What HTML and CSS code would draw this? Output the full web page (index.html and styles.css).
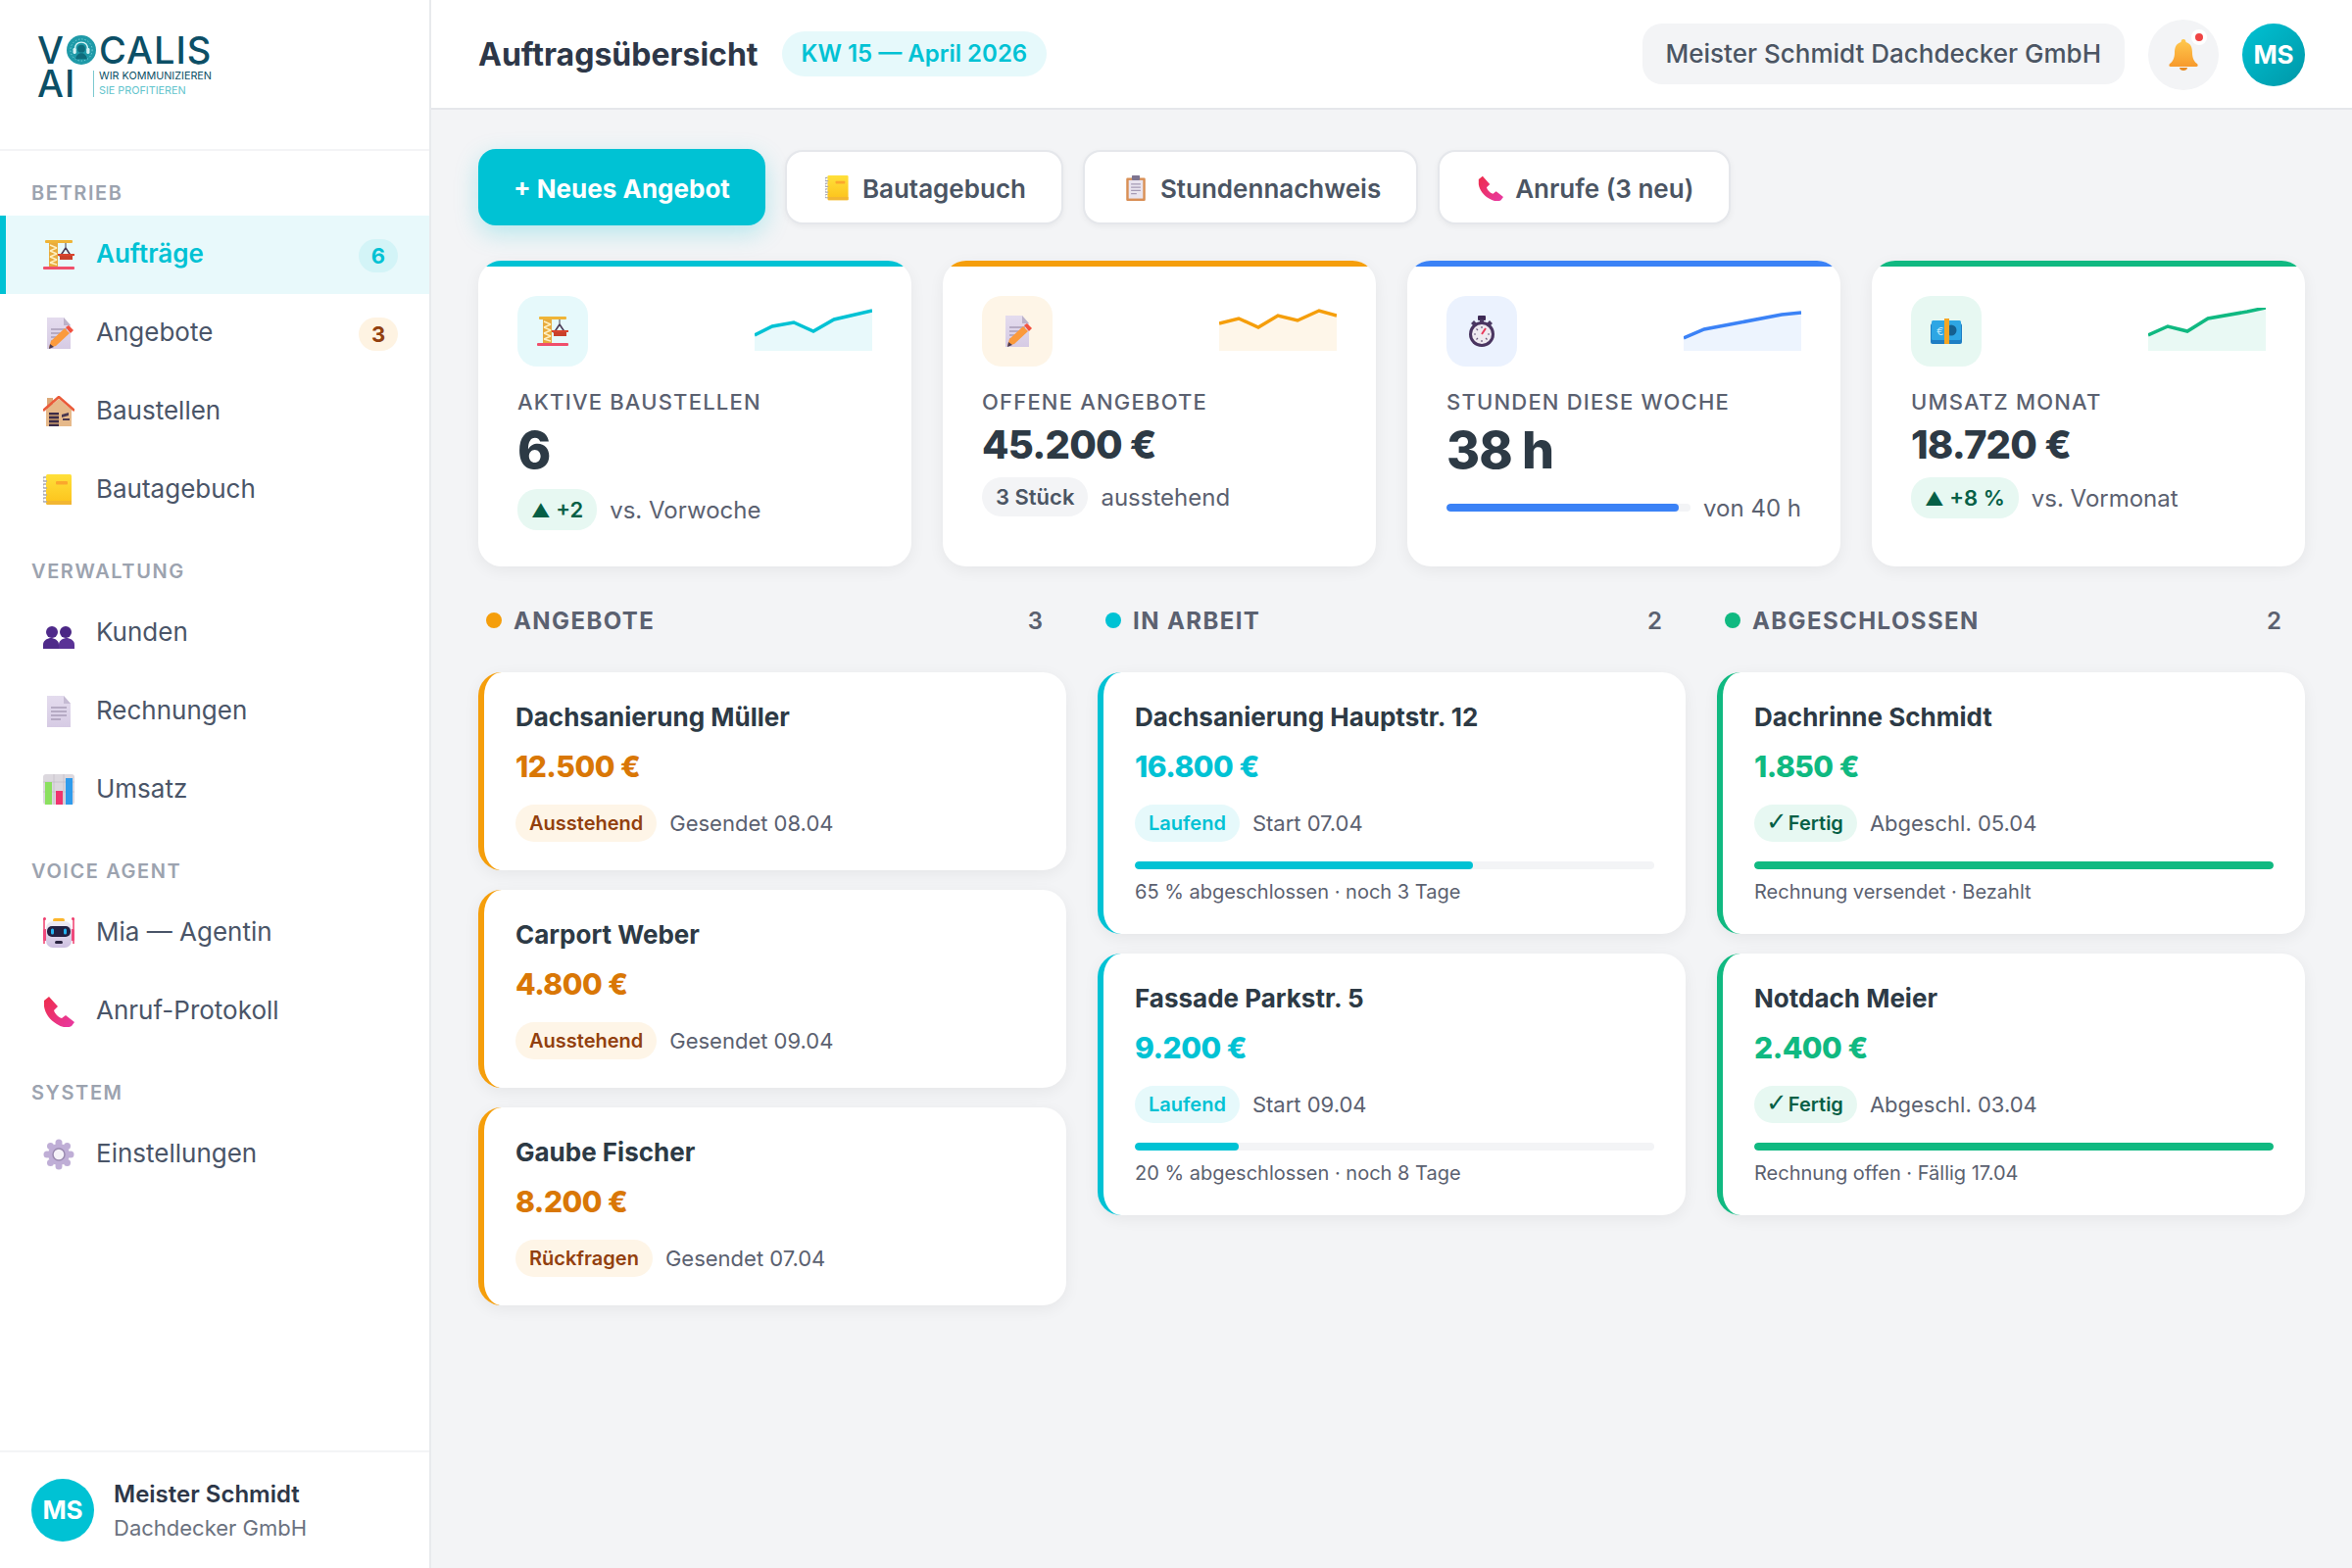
FILE: index.html
```html
<!DOCTYPE html>
<html lang="de">
<head>
    <meta charset="UTF-8">
    <title>Auftragsübersicht</title>
    <link rel="stylesheet" href="styles.css">
</head>
<body>
    <svg class="sprite" width="0" height="0" aria-hidden="true">
        <defs>
            <linearGradient id="gPage" x1="0" y1="0" x2="0" y2="1"><stop offset="0" stop-color="#e4dcee"/><stop offset="1" stop-color="#d6cbe4"/></linearGradient>
            <linearGradient id="gNote" x1="0" y1="0" x2="0" y2="1"><stop offset="0" stop-color="#ffe03a"/><stop offset="1" stop-color="#fcc21b"/></linearGradient>
            <linearGradient id="gPhone" x1="0" y1="0" x2="1" y2="1"><stop offset="0" stop-color="#ee2c4a"/><stop offset="1" stop-color="#e83aa5"/></linearGradient>
            <linearGradient id="gBell" x1="0" y1="0" x2="0" y2="1"><stop offset="0" stop-color="#ffc94d"/><stop offset="1" stop-color="#f79a2c"/></linearGradient>
            <linearGradient id="gRobot" x1="0" y1="0" x2="0" y2="1"><stop offset="0" stop-color="#f1eef5"/><stop offset="1" stop-color="#cdbfe0"/></linearGradient>

            <symbol id="i-crane" viewBox="0 0 32 32">
                <rect x="6" y="3" width="9" height="25" fill="#e8ab3c"/>
                <path d="M7 6l7 3M14 9l-7 3M7 12l7 3M14 15l-7 3M7 18l7 3M14 21l-7 3M7 24l7 2" stroke="#fff0c2" stroke-width="1.4" fill="none"/>
                <rect x="2" y="1" width="28" height="3" rx="1" fill="#efb437"/>
                <rect x="0" y="28" width="32" height="3" rx="1" fill="#f04f6b"/>
                <path d="M23 4v6" stroke="#7d7d86" stroke-width="1.5"/>
                <path d="M23 9l-6 9M23 9l6 9" stroke="#4a3b55" stroke-width="1.6" fill="none"/>
                <rect x="15" y="15" width="17" height="2" fill="#d8432d"/>
                <rect x="17" y="17" width="13" height="4" fill="#c9402a"/>
            </symbol>
            <symbol id="i-memo" viewBox="0 0 32 32">
                <path d="M4 0h17l7 8v24H4z" fill="url(#gPage)"/>
                <path d="M21 0l7 8h-7z" fill="#bcb2c9"/>
                <path d="M8 12h16M8 16h16M8 20h10M8 24h6" stroke="#a99db8" stroke-width="1.3"/>
                <path d="M6 31l2-7 14-13 5 5-14 13z" fill="#fb9a3c"/>
                <path d="M23 10l3-2 5 5-3 3z" fill="#f2513f"/>
                <path d="M6 32l1-5 4 3z" fill="#4b3a4f"/>
            </symbol>
            <symbol id="i-house" viewBox="0 0 32 32">
                <path d="M4 2h6v8l-6 5z" fill="#dca878"/>
                <path d="M3 14L16 3l13 11v17H3z" fill="#e6b98a"/>
                <path d="M0 15L16 1l16 14" stroke="#ea5b3a" stroke-width="2.6" fill="none"/>
                <rect x="6" y="17" width="10" height="14" fill="#3c2c48"/>
                <path d="M6 20h10M6 24h10M6 28h10" stroke="#c99a6c" stroke-width="1.5"/>
                <path d="M19 19l7-2v3l-7 2zM20 23h7v2h-7z" fill="#4a3850"/>
            </symbol>
            <symbol id="i-note" viewBox="0 0 32 32">
                <rect x="3" y="0" width="26" height="31" rx="1.5" fill="url(#gNote)"/>
                <rect x="4" y="27" width="25" height="4" fill="#f2b632"/>
                <rect x="13" y="7" width="12" height="3.5" rx="1" fill="#fba72c"/>
                <path d="M3 3h-1.500a2 2 0 0 0 0 4H4M3 10H1.500a2 2 0 0 0 0 4H4M3 17H1.500a2 2 0 0 0 0 4H4M3 24H1.500a2 2 0 0 0 0 4H4" stroke="#a9a9b2" stroke-width="1.5" fill="none"/>
            </symbol>
            <symbol id="i-people" viewBox="0 0 32 32">
                <path d="M0 28c0-4 3-6 7-7h2c4 1 7 3 7 7v4H0z" fill="#4f2a8a"/>
                <path d="M16 28c0-4 3-6 7-7h2c4 1 7 3 7 7v4H16z" fill="#5a3296"/>
                <circle cx="9" cy="15" r="6" fill="#4f2a8a"/>
                <circle cx="23" cy="15" r="6" fill="#4b2785"/>
            </symbol>
            <symbol id="i-page" viewBox="0 0 32 32">
                <path d="M4 0h17l7 8v24H4z" fill="url(#gPage)"/>
                <path d="M21 0l7 8h-7z" fill="#c5bbd3"/>
                <path d="M8 12h16M8 16h16M8 20h16M8 24h10" stroke="#a99db8" stroke-width="1.3"/>
            </symbol>
            <symbol id="i-chart" viewBox="0 0 32 32">
                <rect x="0" y="0" width="32" height="31" rx="3" fill="#dcd8de"/>
                <path d="M11 0v31M21 0v31M0 8h32M0 18h32" stroke="#c4c0c8" stroke-width=".8"/>
                <rect x="2" y="8" width="7" height="23" fill="#8be05f"/>
                <rect x="13" y="17" width="7" height="14" fill="#f0346e"/>
                <rect x="23" y="4" width="7" height="27" fill="#2f9bec"/>
            </symbol>
            <symbol id="i-robot" viewBox="0 0 32 32">
                <path d="M1 1v26M31 1v26" stroke="#ef3f6f" stroke-width="1.500"/>
                <circle cx="1.500" cy="1.500" r="1.500" fill="#ef3f6f"/><circle cx="30.500" cy="1.500" r="1.500" fill="#ef3f6f"/>
                <rect x="0" y="12" width="4" height="12" rx="1.500" fill="#ef4a7c"/><rect x="28" y="12" width="4" height="12" rx="1.500" fill="#ef4a7c"/>
                <rect x="10" y="1" width="12" height="4" rx="2" fill="#fcb62b"/>
                <rect x="3" y="4" width="26" height="27" rx="7" fill="url(#gRobot)"/>
                <rect x="4" y="9" width="24" height="11" rx="5" fill="#232042"/>
                <rect x="8" y="11.500" width="3" height="6" rx="1.500" fill="#25b4f0"/><rect x="21" y="11.500" width="3" height="6" rx="1.500" fill="#25b4f0"/>
                <rect x="12" y="24" width="8" height="3" rx="1.500" fill="#2a2440"/>
            </symbol>
            <symbol id="i-phone" viewBox="0 0 32 32">
                <path d="M1 5l5-4 9 10-4 4c1 3 4 7 8 8l4-3 9 7-3 4c-3 2-9 2-15-2C7 25 2 18 1 11c0-2 0-4 0-6z" fill="url(#gPhone)"/>
            </symbol>
            <symbol id="i-gear" viewBox="0 0 32 32">
                <g fill="#bfaed6">
                    <circle cx="16" cy="16" r="11"/>
                    <circle cx="16" cy="4" r="3.500"/><circle cx="16" cy="28" r="3.500"/><circle cx="4" cy="16" r="3.500"/><circle cx="28" cy="16" r="3.500"/>
                    <circle cx="7.500" cy="7.500" r="3.500"/><circle cx="24.500" cy="7.500" r="3.500"/><circle cx="7.500" cy="24.500" r="3.500"/><circle cx="24.500" cy="24.500" r="3.500"/>
                </g>
                <circle cx="16" cy="16" r="6" fill="#f5f2f8" stroke="#9a8ab0" stroke-width="1.500"/>
            </symbol>
            <symbol id="i-clip" viewBox="0 0 32 32">
                <rect x="4" y="3" width="24" height="29" rx="1.500" fill="#d98f55"/>
                <rect x="7" y="6" width="18" height="23" fill="#e9e4ef"/>
                <rect x="11" y="0" width="10" height="6" rx="1" fill="#7d7490"/>
                <path d="M10 11h12M10 15h12M10 19h12M10 23h7" stroke="#a59ab5" stroke-width="1.500"/>
            </symbol>
            <symbol id="i-watch" viewBox="0 0 32 32">
                <rect x="12" y="0" width="8" height="5" rx="1" fill="#3e2a56"/>
                <rect x="14" y="4" width="4" height="4" fill="#4b3a63"/>
                <path d="M5 8l3-3 3 3-3 3zM27 8l-3-3-3 3 3 3z" fill="#4b3a63"/>
                <circle cx="16" cy="19" r="13" fill="#4a3560"/>
                <circle cx="16" cy="19" r="10" fill="#efeaf0"/>
                <path d="M16 19l4-6" stroke="#ea3a5a" stroke-width="2"/>
                <path d="M16 11v2M16 25v2M8 19h2M22 19h2M10.500 13.500l1.500 1.500M21.500 24.500l-1.500-1.500M10.500 24.500l1.500-1.500" stroke="#6b5c7c" stroke-width="1.200"/>
            </symbol>
            <symbol id="i-cash" viewBox="0 0 32 32">
                <rect x="0" y="8" width="32" height="21" rx="2" fill="#1f7ec4"/>
                <rect x="1" y="5" width="30" height="20" rx="1.500" fill="#2ea6e4"/>
                <circle cx="21" cy="15" r="5.500" fill="#15608f"/>
                <text x="6" y="20" class="cash-sign">€</text>
                <rect x="14" y="3" width="5" height="26" fill="#f5a623"/>
            </symbol>
            <symbol id="i-bell" viewBox="0 0 32 32">
                <path d="M16 0c-2 0-2.500 1.500-2.500 3C8 4.500 7 9 7 14c0 5-2 9-5 11-1 1-1 3 1 3h26c2 0 2-2 1-3-3-2-5-6-5-11 0-5-1-9.500-6.500-11 0-1.500-.5-3-2.500-3z" fill="url(#gBell)"/>
                <path d="M12 29h8c0 2-2 3-4 3s-4-1-4-3z" fill="#e88a22"/>
            </symbol>
            <symbol id="i-globe" viewBox="0 0 46 46">
                <circle cx="23" cy="23" r="23" fill="#1f9aa8"/>
                <circle cx="23" cy="23" r="17" fill="none" stroke="#7fd4dc" stroke-width="1.500" stroke-dasharray="2 3"/>
                <path d="M13 22c0-7 4-11 10-11s10 4 10 11" fill="none" stroke="#d6f3f5" stroke-width="2"/>
                <rect x="10" y="20" width="5" height="9" rx="2" fill="#d6f3f5"/><rect x="31" y="20" width="5" height="9" rx="2" fill="#d6f3f5"/>
                <circle cx="23" cy="21" r="6" fill="#0e6c7c"/>
                <path d="M14 37c1-6 5-9 9-9s8 3 9 9z" fill="#0e6c7c"/>
            </symbol>
        </defs>
    </svg>

    <aside class="sidebar">
        <div class="logo">
            <div class="logo-top"><span>V</span><svg class="logo-globe"><use href="#i-globe"/></svg><span>CALIS</span></div>
            <div class="logo-bottom">
                <span class="logo-ai">AI</span>
                <div class="logo-claim"><span>WIR KOMMUNIZIEREN</span><span class="logo-claim-soft">SIE PROFITIEREN</span></div>
            </div>
        </div>

        <nav class="nav">
            <div class="nav-label">BETRIEB</div>
            <a class="nav-item active"><svg class="nav-icon"><use href="#i-crane"/></svg>Aufträge<span class="nav-badge">6</span></a>
            <a class="nav-item"><svg class="nav-icon"><use href="#i-memo"/></svg>Angebote<span class="nav-badge amber">3</span></a>
            <a class="nav-item"><svg class="nav-icon"><use href="#i-house"/></svg>Baustellen</a>
            <a class="nav-item"><svg class="nav-icon"><use href="#i-note"/></svg>Bautagebuch</a>

            <div class="nav-label">VERWALTUNG</div>
            <a class="nav-item"><svg class="nav-icon"><use href="#i-people"/></svg>Kunden</a>
            <a class="nav-item"><svg class="nav-icon"><use href="#i-page"/></svg>Rechnungen</a>
            <a class="nav-item"><svg class="nav-icon"><use href="#i-chart"/></svg>Umsatz</a>

            <div class="nav-label">VOICE AGENT</div>
            <a class="nav-item"><svg class="nav-icon"><use href="#i-robot"/></svg>Mia — Agentin</a>
            <a class="nav-item"><svg class="nav-icon"><use href="#i-phone"/></svg>Anruf-Protokoll</a>

            <div class="nav-label">SYSTEM</div>
            <a class="nav-item"><svg class="nav-icon"><use href="#i-gear"/></svg>Einstellungen</a>
        </nav>

        <div class="side-user">
            <div class="side-avatar">MS</div>
            <div>
                <div class="side-name">Meister Schmidt</div>
                <div class="side-firm">Dachdecker GmbH</div>
            </div>
        </div>
    </aside>

    <div class="main">
        <header class="topbar">
            <h1>Auftragsübersicht</h1>
            <span class="week-pill">KW 15 — April 2026</span>
            <div class="company">Meister Schmidt Dachdecker GmbH</div>
            <div class="bell"><svg class="bell-icon"><use href="#i-bell"/></svg><span class="bell-dot"></span></div>
            <div class="top-avatar">MS</div>
        </header>

        <div class="content">
            <div class="actions">
                <button class="btn primary">+ Neues Angebot</button>
                <button class="btn"><svg class="btn-icon"><use href="#i-note"/></svg>Bautagebuch</button>
                <button class="btn"><svg class="btn-icon"><use href="#i-clip"/></svg>Stundennachweis</button>
                <button class="btn"><svg class="btn-icon"><use href="#i-phone"/></svg>Anrufe (3 neu)</button>
            </div>

            <div class="kpis">
                <div class="kpi teal">
                    <div class="kpi-head">
                        <div class="kpi-icon"><svg><use href="#i-crane"/></svg></div>
                        <svg class="spark" viewBox="0 0 120 44"><path class="spark-fill" d="M0 28L18 19 40 15 60 24 81 12 120 3V44H0z"/><path class="spark-line" d="M0 28L18 19 40 15 60 24 81 12 120 3"/></svg>
                    </div>
                    <div class="kpi-label">AKTIVE BAUSTELLEN</div>
                    <div class="kpi-value big">6</div>
                    <div class="kpi-row"><span class="chip up"><span class="arrow">▲</span> +2</span><span>vs. Vorwoche</span></div>
                </div>
                <div class="kpi orange">
                    <div class="kpi-head">
                        <div class="kpi-icon"><svg><use href="#i-memo"/></svg></div>
                        <svg class="spark" viewBox="0 0 120 44"><path class="spark-fill" d="M0 16L20 11 40 20 60 8 80 13 102 3 120 8V44H0z"/><path class="spark-line" d="M0 16L20 11 40 20 60 8 80 13 102 3 120 8"/></svg>
                    </div>
                    <div class="kpi-label">OFFENE ANGEBOTE</div>
                    <div class="kpi-value">45.200 €</div>
                    <div class="kpi-row"><span class="chip plain">3 Stück</span><span>ausstehend</span></div>
                </div>
                <div class="kpi blue">
                    <div class="kpi-head">
                        <div class="kpi-icon"><svg><use href="#i-watch"/></svg></div>
                        <svg class="spark" viewBox="0 0 120 44"><path class="spark-fill" d="M0 31L21 22 58 15 100 7 120 5V44H0z"/><path class="spark-line" d="M0 31L21 22 58 15 100 7 120 5"/></svg>
                    </div>
                    <div class="kpi-label">STUNDEN DIESE WOCHE</div>
                    <div class="kpi-value big">38 h</div>
                    <div class="kpi-row hours"><div class="track"><div class="fill" style="width: 95%"></div></div><span>von 40 h</span></div>
                </div>
                <div class="kpi green">
                    <div class="kpi-head">
                        <div class="kpi-icon"><svg><use href="#i-cash"/></svg></div>
                        <svg class="spark" viewBox="0 0 120 44"><path class="spark-fill" d="M0 28L20 19 40 24 61 11 101 4 120 0V44H0z"/><path class="spark-line" d="M0 28L20 19 40 24 61 11 101 4 120 0"/></svg>
                    </div>
                    <div class="kpi-label">UMSATZ MONAT</div>
                    <div class="kpi-value">18.720 €</div>
                    <div class="kpi-row"><span class="chip up"><span class="arrow">▲</span> +8 %</span><span>vs. Vormonat</span></div>
                </div>
            </div>

            <div class="board">
                <section class="column orange">
                    <div class="col-head"><span class="dot"></span><span class="col-title">ANGEBOTE</span><span class="col-count">3</span></div>
                    <div class="job">
                        <div class="job-title">Dachsanierung Müller</div>
                        <div class="job-price">12.500 €</div>
                        <div class="job-meta"><span class="status">Ausstehend</span><span>Gesendet 08.04</span></div>
                    </div>
                    <div class="job">
                        <div class="job-title">Carport Weber</div>
                        <div class="job-price">4.800 €</div>
                        <div class="job-meta"><span class="status">Ausstehend</span><span>Gesendet 09.04</span></div>
                    </div>
                    <div class="job">
                        <div class="job-title">Gaube Fischer</div>
                        <div class="job-price">8.200 €</div>
                        <div class="job-meta"><span class="status">Rückfragen</span><span>Gesendet 07.04</span></div>
                    </div>
                </section>

                <section class="column teal">
                    <div class="col-head"><span class="dot"></span><span class="col-title">IN ARBEIT</span><span class="col-count">2</span></div>
                    <div class="job">
                        <div class="job-title">Dachsanierung Hauptstr. 12</div>
                        <div class="job-price">16.800 €</div>
                        <div class="job-meta"><span class="status">Laufend</span><span>Start 07.04</span></div>
                        <div class="track job-track"><div class="fill" style="width: 65%"></div></div>
                        <div class="job-note">65 % abgeschlossen · noch 3 Tage</div>
                    </div>
                    <div class="job">
                        <div class="job-title">Fassade Parkstr. 5</div>
                        <div class="job-price">9.200 €</div>
                        <div class="job-meta"><span class="status">Laufend</span><span>Start 09.04</span></div>
                        <div class="track job-track"><div class="fill" style="width: 20%"></div></div>
                        <div class="job-note">20 % abgeschlossen · noch 8 Tage</div>
                    </div>
                </section>

                <section class="column green">
                    <div class="col-head"><span class="dot"></span><span class="col-title">ABGESCHLOSSEN</span><span class="col-count">2</span></div>
                    <div class="job">
                        <div class="job-title">Dachrinne Schmidt</div>
                        <div class="job-price">1.850 €</div>
                        <div class="job-meta"><span class="status"><span class="tick">✓</span> Fertig</span><span>Abgeschl. 05.04</span></div>
                        <div class="track job-track"><div class="fill" style="width: 100%"></div></div>
                        <div class="job-note">Rechnung versendet · Bezahlt</div>
                    </div>
                    <div class="job">
                        <div class="job-title">Notdach Meier</div>
                        <div class="job-price">2.400 €</div>
                        <div class="job-meta"><span class="status"><span class="tick">✓</span> Fertig</span><span>Abgeschl. 03.04</span></div>
                        <div class="track job-track"><div class="fill" style="width: 100%"></div></div>
                        <div class="job-note">Rechnung offen · Fällig 17.04</div>
                    </div>
                </section>
            </div>
        </div>
    </div>
</body>
</html>
```

FILE: styles.css
```css
* {
    box-sizing: border-box;
}

body {
    margin: 0;
    display: flex;
    height: 100vh;
    overflow: hidden;
    background-color: #f3f4f6;
    color: #2d3748;
    font-family: Inter, "Noto Sans", sans-serif;
}

.sprite {
    position: absolute;
}

.cash-sign {
    font-family: Inter, sans-serif;
    font-size: 11px;
    fill: #bfe8fa;
}

/* Seitenleiste */
.sidebar {
    width: 440px;
    flex-shrink: 0;
    display: flex;
    flex-direction: column;
    background-color: #fff;
    border-right: 2px solid #e8eaed;
}

.logo {
    height: 154px;
    padding: 36px 0 0 38px;
    border-bottom: 2px solid #f3f4f6;
    color: #0c4f66;
}

.logo-top {
    display: flex;
    align-items: center;
    height: 30px;
    font-size: 38px;
    font-weight: 500;
    letter-spacing: 1px;
    line-height: 30px;
}

.logo-globe {
    width: 30px;
    height: 30px;
    margin: 0 3px 0 2px;
}

.logo-bottom {
    display: flex;
    align-items: center;
    margin-top: 4px;
}

.logo-ai {
    width: 57px;
    font-size: 38px;
    font-weight: 500;
    letter-spacing: 1px;
    line-height: 30px;
}

.logo-claim {
    display: flex;
    flex-direction: column;
    gap: 3px;
    padding-left: 5px;
    border-left: 1px solid #7cc9d0;
    font-size: 10.8px;
    line-height: 12px;
    white-space: nowrap;
}

.logo-claim-soft {
    color: #62c4cc;
}

.nav {
    flex: 1;
}

.nav-label {
    padding: 31px 32px 11px;
    color: #9ca3af;
    font-size: 20px;
    font-weight: 600;
    letter-spacing: 1.6px;
    line-height: 24px;
}

.nav-item {
    display: flex;
    align-items: center;
    height: 80px;
    padding: 0 32px 4px 44px;
    color: #4a5568;
    font-size: 26px;
}

.nav-item.active {
    padding-left: 38px;
    border-left: 6px solid #00c2d4;
    background-color: #e8f9fb;
    color: #00c2d4;
    font-weight: 600;
}

.nav-icon {
    width: 32px;
    height: 32px;
    margin: 4px 22px 0 0;
    flex-shrink: 0;
}

.nav-badge {
    width: 40px;
    height: 34px;
    margin: 6px 0 0 auto;
    border-radius: 17px;
    background-color: #d3f4f7;
    color: #00c2d4;
    font-size: 22px;
    font-weight: 700;
    line-height: 34px;
    text-align: center;
}

.nav-badge.amber {
    background-color: #fef3e2;
    color: #92400e;
}

.side-user {
    display: flex;
    align-items: center;
    gap: 20px;
    height: 120px;
    padding: 0 32px;
    border-top: 2px solid #f3f4f6;
}

.side-avatar {
    width: 64px;
    height: 64px;
    border-radius: 50%;
    background-color: #00c2d4;
    color: #fff;
    font-size: 26px;
    font-weight: 700;
    line-height: 64px;
    text-align: center;
}

.side-name {
    font-size: 24px;
    font-weight: 600;
    line-height: 36px;
}

.side-firm {
    color: #6b7280;
    font-size: 22px;
    line-height: 32px;
}

/* Hauptbereich */
.main {
    flex: 1;
    min-width: 0;
}

.topbar {
    display: flex;
    align-items: center;
    height: 112px;
    padding: 0 48px;
    border-bottom: 2px solid #e5e7eb;
    background-color: #fff;
}

.topbar h1 {
    margin: 0 24px 0 0;
    font-size: 32px;
    font-weight: 700;
}

.week-pill {
    height: 46px;
    padding: 0 20px;
    border-radius: 23px;
    background-color: #e6f9fb;
    color: #00c2d4;
    font-size: 24px;
    font-weight: 600;
    line-height: 46px;
}

.company {
    height: 62px;
    margin-left: auto;
    padding: 0 24px;
    border-radius: 20px;
    background-color: #f3f4f6;
    color: #4b5563;
    font-size: 26px;
    font-weight: 500;
    line-height: 62px;
}

.bell {
    position: relative;
    display: flex;
    align-items: center;
    justify-content: center;
    width: 72px;
    height: 72px;
    margin: 2px 24px 0;
    border-radius: 50%;
    background-color: #f3f4f6;
}

.bell-icon {
    width: 32px;
    height: 32px;
}

.bell-dot {
    position: absolute;
    top: 10px;
    right: 12px;
    width: 16px;
    height: 16px;
    border: 4px solid #fff;
    border-radius: 50%;
    background-color: #ef4444;
}

.top-avatar {
    width: 64px;
    height: 64px;
    margin-top: 2px;
    border-radius: 50%;
    background: linear-gradient(135deg, #00c2d4, #0097a7);
    color: #fff;
    font-size: 26px;
    font-weight: 700;
    line-height: 64px;
    text-align: center;
}

.content {
    padding: 40px 48px 0;
}

.actions {
    display: flex;
    align-items: center;
    gap: 20px;
}

.btn {
    display: flex;
    align-items: center;
    gap: 12px;
    height: 76px;
    padding: 2px 36px 0 39px;
    border: 2px solid #e5e7eb;
    border-radius: 18px;
    background-color: #fff;
    box-shadow: 0 2px 6px rgba(0, 0, 0, 0.05);
    color: #4b5563;
    font-family: inherit;
    font-size: 26px;
    font-weight: 600;
}

.btn.primary {
    height: 78px;
    padding-left: 36px;
    border: none;
    background-color: #00c2d4;
    box-shadow: 0 8px 24px rgba(0, 194, 212, 0.25);
    color: #fff;
    font-weight: 700;
}

.btn-icon {
    width: 26px;
    height: 26px;
}

.kpis {
    display: grid;
    grid-template-columns: repeat(4, 1fr);
    gap: 32px;
    margin-top: 36px;
}

.kpi {
    position: relative;
    overflow: hidden;
    padding: 36px 40px 37px;
    border-radius: 24px;
    background-color: #fff;
    box-shadow: 0 4px 16px rgba(0, 0, 0, 0.06);
}

.kpi::before {
    content: "";
    position: absolute;
    top: 0;
    left: 0;
    right: 0;
    height: 6px;
    background-color: var(--accent);
}

.teal { --accent: #00c2d4; --soft: #e6f9fb; }
.orange { --accent: #f59e0b; --soft: #fef5e7; }
.blue { --accent: #3b82f6; --soft: #ebf2fe; }
.green { --accent: #10b981; --soft: #e7f8f2; }

.kpi-head {
    display: flex;
    justify-content: space-between;
}

.kpi-icon {
    display: flex;
    align-items: center;
    justify-content: center;
    width: 72px;
    height: 72px;
    border-radius: 20px;
    background-color: var(--soft);
}

.kpi-icon svg {
    width: 32px;
    height: 32px;
}

.spark {
    width: 120px;
    height: 44px;
    margin-top: 12px;
}

.spark-fill {
    fill: var(--accent);
    opacity: 0.09;
}

.spark-line {
    fill: none;
    stroke: var(--accent);
    stroke-width: 3.5;
}

.kpi-label {
    margin-top: 24px;
    color: #5b6170;
    font-size: 22px;
    font-weight: 500;
    letter-spacing: 1.2px;
    line-height: 24px;
}

.kpi-value {
    margin-top: 5px;
    color: #2d3a45;
    font-size: 40px;
    font-weight: 800;
    letter-spacing: -0.8px;
    line-height: 53px;
}

.kpi-value.big {
    margin-top: 7px;
    font-size: 52px;
    letter-spacing: -1px;
    line-height: 62px;
}

.kpi-row {
    display: flex;
    align-items: center;
    gap: 13px;
    margin-top: 7px;
    color: #5b6170;
    font-size: 24px;
}

.big + .kpi-row {
    margin-top: 8px;
}

.chip {
    height: 40px;
    padding: 0 14px;
    border-radius: 20px;
    font-size: 22px;
    font-weight: 600;
    line-height: 40px;
}

.chip.up {
    height: 42px;
    background-color: #e7f8f2;
    color: #065f46;
    line-height: 42px;
}

.chip.plain {
    background-color: #f3f4f6;
    color: #4b5563;
}

.arrow {
    font-size: 19px;
}

.kpi-row.hours {
    margin-top: 11px;
    height: 32px;
}

.track {
    height: 8px;
    border-radius: 4px;
    background-color: #f3f4f6;
    overflow: hidden;
}

.fill {
    height: 100%;
    border-radius: 4px;
    background-color: var(--accent);
}

.hours .track {
    flex: 1;
}

.board {
    display: grid;
    grid-template-columns: repeat(3, 1fr);
    gap: 32px;
    align-items: start;
    margin-top: 39px;
}

.col-head {
    display: flex;
    align-items: center;
    height: 32px;
    padding: 0 24px 0 8px;
    margin-bottom: 37px;
    color: #5b6170;
    font-size: 24px;
    font-weight: 700;
}

.dot {
    width: 16px;
    height: 16px;
    margin-right: 12px;
    border-radius: 50%;
    background-color: var(--accent);
}

.col-title {
    letter-spacing: 1.4px;
}

.col-count {
    margin-left: auto;
    font-weight: 600;
}

.job {
    margin-bottom: 20px;
    padding: 31px 32px 29px;
    border-left: 6px solid var(--accent);
    border-radius: 24px;
    background-color: #fff;
    box-shadow: 0 4px 16px rgba(0, 0, 0, 0.06);
}

.job-title {
    color: #2d3a45;
    font-size: 26px;
    font-weight: 700;
    line-height: 30px;
}

.job-price {
    margin-top: 15px;
    color: var(--accent);
    font-size: 30px;
    font-weight: 800;
    letter-spacing: -0.5px;
    line-height: 40px;
}

.orange .job-price {
    color: #d97706;
}

.job-meta {
    display: flex;
    align-items: center;
    gap: 13px;
    margin-top: 19px;
    color: #5b6170;
    font-size: 22px;
}

.status {
    height: 38px;
    padding: 0 14px;
    border-radius: 19px;
    background-color: var(--soft);
    color: var(--accent);
    font-size: 20px;
    font-weight: 600;
    line-height: 38px;
}

.orange .status {
    color: #92400e;
}

.green .status {
    color: #065f46;
}

.tick {
    margin: 0 -4px 0 -2px;
    font-family: "DejaVu Sans", sans-serif;
    font-size: 26px;
    font-weight: 400;
    line-height: 1;
}

.job-track {
    margin-top: 20px;
}

.job-note {
    margin-top: 9px;
    color: #5b6170;
    font-size: 20px;
    line-height: 28px;
}
```
